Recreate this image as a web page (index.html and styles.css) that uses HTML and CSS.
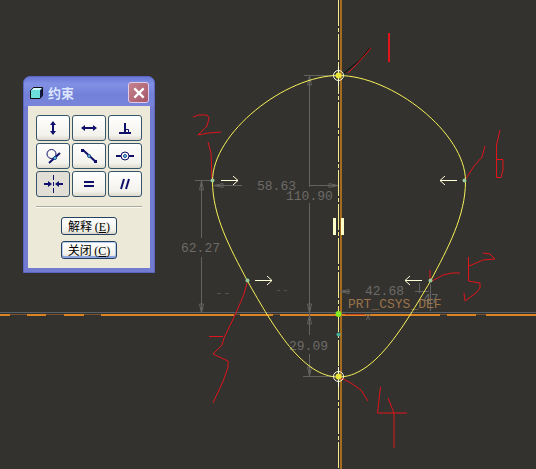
FILE: index.html
```html
<!DOCTYPE html>
<html lang="zh-CN">
<head>
<meta charset="utf-8">
<title>约束</title>
<link rel="stylesheet" href="styles.css">
</head>
<body>
<main class="workspace">
  <svg class="sketch" viewBox="0 0 536 469" role="img" aria-label="草绘">
    <defs>
      <g id="arrow"><path d="M0 .5H17M12 -4L17 .5L12 5"/></g>
      <g id="tip"><path d="M.5 0L-1.500 9H2.500Z"/></g>
    </defs>

    <!-- Datum axes -->
    <g class="crisp">
      <path class="axis-shade" d="M0 312.5H536"/>
      <path class="axis-base" d="M0 314.5H536"/>
      <path class="axis" d="M0 315H10M27 315H46M64 315H84M101 315H234M240 315H273M280 315H440M447 315H476M486 315H536"/>
      <path class="axis-upright" d="M340.5 0V469"/>
      <path class="axis-center" d="M338.5 0V469"/>
    </g>

    <!-- Dimensions -->
    <g class="dimension">
      <path d="M195 180.5H211M201.5 181V238M201.5 257V313M304 75.5H334M309.5 77V187M309.5 203V335M309.5 354V376M303 376.5H334M215 185.5H242M310 185.5H338M340 291.5H350M415 291.5H429M419.5 283V293M430.5 284V311"/>
      <path class="faint" d="M217 293.5H221M225 293.5H229M277 290.5H280M284 290.5H287"/>
      <use href="#tip" x="201" y="181"/>
      <use href="#tip" x="309" y="76"/>
      <use href="#tip" x="309" y="315"/>
      <use href="#tip" transform="translate(202 313) rotate(180)"/>
      <use href="#tip" transform="translate(310 313) rotate(180)"/>
      <use href="#tip" transform="translate(310 376) rotate(180)"/>
      <use href="#tip" transform="translate(214 186) rotate(-90)"/>
      <use href="#tip" transform="translate(338 185) rotate(90)"/>
      <use href="#tip" transform="translate(340 292) rotate(-90)"/>
      <path d="M366 314L370 320M370 314L366 320"/>
    </g>
    <g class="value">
      <text x="257" y="190">58.63</text>
      <text x="286" y="200">110.90</text>
      <text x="181" y="252">62.27</text>
      <text x="365" y="295">42.68</text>
      <text x="423" y="303">47</text>
      <text x="289" y="350">29.09</text>
      <text class="csys" x="348" y="308">PRT_CSYS_DEF</text>
    </g>

    <!-- Freehand notes -->
    <g class="ink">
      <path class="shadow" d="M344 73L360 60L370 48"/>
      <path d="M348 73L357 64L371 48"/>
      <path class="bold" d="M389 33V62"/>
      <path d="M193 117L199 115H207L209 118L207 126L198 135L208 133L221 132M208 142L211 153L212 180"/>
      <path d="M247 283L244 294L236 313L224 338L222 345L213 354L228 361L228 367L224 379L213 403M209 336.5H223"/>
      <path d="M341 378L351 383L361 390L368 401M380.500 387L377.500 413H407M388 398L394 413V448"/>
      <path d="M432 281L443 275L452 273H460M468.500 257V281L480 283L480 288L476 293L465 301L464 293M469 266L483 260L495 259L490 254L483 253M430 270V279"/>
      <path d="M465 180L474 166L482 157L485 146M500 130L496.500 145V177.500H501L503 170V159.500H497"/>
    </g>

    <!-- Spline -->
    <path class="spline" d="M338.500 75.500C285 75.500 212.500 133 212.500 181C212.500 216 230 248 247.500 281C274 328 303 377 338.500 377C374 377 403 328 430.500 281C448 248 465.500 216 465.500 181C465.500 133 392 75.500 338.500 75.500Z"/>

    <!-- Constraints -->
    <g class="arrows">
      <use href="#arrow" x="221" y="180"/>
      <use href="#arrow" x="255" y="280"/>
      <use href="#arrow" transform="translate(457 181) rotate(180)"/>
      <use href="#arrow" transform="translate(422 281) rotate(180)"/>
      <circle cx="338.5" cy="75.5" r="5"/>
      <circle cx="338.5" cy="376.5" r="5"/>
      <path d="M338.5 66V86M338.5 367V387"/>
    </g>
    <path class="bars" d="M333 218H336V235H333ZM341 218H344V235H341Z"/>
    <g class="points">
      <circle cx="212.5" cy="180.5" r="2"/>
      <circle cx="464.5" cy="180.5" r="2"/>
      <circle cx="247.5" cy="280.5" r="2"/>
      <circle cx="430.5" cy="280.5" r="2"/>
      <circle class="cyan" cx="338.5" cy="334.5" r="2"/>
      <circle class="lime" cx="338.5" cy="314" r="3"/>
      <circle class="gold" cx="338.5" cy="75.5" r="3"/>
      <circle class="gold" cx="338.5" cy="376.5" r="3"/>
    </g>
    <path class="x-axis" d="M345 314.5H365"/>
  </svg>

  <section class="dialog" aria-labelledby="dialog-title">
    <header class="titlebar">
      <svg class="cube" viewBox="0 0 13 12" aria-hidden="true">
        <path d="M.5 3.5L3.5 .5H12.5V8.500L10 11.5H.5Z" fill="#111844" stroke="#111"/>
        <path d="M1 3.5L3.5 1H12L10 3.5Z" fill="#d4ffff"/>
        <path d="M1 3H10V11H1Z" fill="#6ee0dc"/>
      </svg>
      <h1 class="title" id="dialog-title">约束</h1>
      <button class="close" type="button" aria-label="关闭窗口">
        <svg viewBox="0 0 12 12" aria-hidden="true"><path d="M2 2L10 10M10 2L2 10" stroke="#fff" stroke-width="2"/></svg>
      </button>
    </header>
    <div class="content">
      <div class="tools">
        <button class="tool" type="button" aria-label="竖直"><svg viewBox="0 0 20 16"><path d="M10 3V13"/><path class="solid" d="M10 1L13 5H7ZM10 15L7 11H13Z"/></svg></button>
        <button class="tool" type="button" aria-label="水平"><svg viewBox="0 0 20 16"><path d="M4 8H16"/><path class="solid" d="M2 8L6 5V11ZM18 8L14 5V11Z"/></svg></button>
        <button class="tool" type="button" aria-label="垂直"><svg viewBox="0 0 20 16"><path d="M10 3V13M4 13H16"/><path class="thin" d="M11 9.5H13.5V12"/></svg></button>
        <button class="tool" type="button" aria-label="相切"><svg viewBox="0 0 20 16"><circle class="thin" cx="8.5" cy="6" r="4.5"/><path d="M6 15L17 5"/><circle class="node" cx="12" cy="10" r="1.5"/></svg></button>
        <button class="tool" type="button" aria-label="中点"><svg viewBox="0 0 20 16"><path d="M4 2L17 14"/><path class="solid" d="M2 1H5V4H2ZM15 12H18V15H15Z"/><circle class="node" cx="10" cy="8" r="1.5"/></svg></button>
        <button class="tool" type="button" aria-label="重合"><svg viewBox="0 0 20 16"><path d="M1 8H6M14 8H19"/><circle class="thin" cx="10" cy="8" r="4"/><circle class="node" cx="10" cy="8" r="1.5"/></svg></button>
        <button class="tool pressed" type="button" aria-pressed="true" aria-label="对称"><svg viewBox="0 0 20 18"><path class="thin" d="M10.5 0V5M10.5 7V11M10.5 13V18"/><path d="M1 9H6M15 9H20"/><path class="solid" d="M9 9L5 6V12ZM12 9L16 6V12Z"/></svg></button>
        <button class="tool" type="button" aria-label="相等"><svg viewBox="0 0 20 16"><path d="M5 6H15M5 10H15"/></svg></button>
        <button class="tool" type="button" aria-label="平行"><svg viewBox="0 0 20 16"><path d="M6 13L9 3M11 13L14 3"/></svg></button>
      </div>
      <hr class="divider">
      <div class="actions">
        <button class="action" type="button">解释 <span class="key">(<u>E</u>)</span></button>
        <button class="action primary" type="button">关闭 <span class="key">(<u>C</u>)</span></button>
      </div>
    </div>
  </section>
</main>
</body>
</html>
```
FILE: styles.css
```css
* { box-sizing: border-box; }
body { margin: 0; background: #33322e; }
.workspace { position: relative; }

.sketch { display: block; width: 100%; height: auto; fill: none; }
.crisp { shape-rendering: crispEdges; }
.axis-shade { stroke: #58606a; }
.axis-base { stroke: #79502c; }
.axis { stroke: #dc8424; stroke-width: 2; }
.axis-upright { stroke: #a56c20; stroke-width: 2; }
.axis-center { stroke: #f6eb8d; stroke-dasharray: 26 2 4 2; }
.dimension { stroke: #62625f; }
.faint { stroke: #51514e; }
.value { font: 13px "Liberation Mono", monospace; fill: #6c6b68; }
.csys { fill: #9a744c; }
.ink { stroke: #e0141b; }
.bold { stroke-width: 2; }
.shadow { stroke: #080808; }
.spline { stroke: #f8f258; }
.arrows { stroke: #ffffda; }
.bars { fill: #ffffc8; }
.points { fill: #9bc99e; }
.cyan { fill: #42b09a; }
.lime { fill: #82ed20; }
.gold { fill: #e9e53b; }
.x-axis { stroke: #d44a20; }

.dialog {
  position: absolute;
  top: 76px;
  left: 23px;
  width: 132px;
  padding: 0 4px 4px;
  background: #737bd0;
  border: 1px solid #5c65c4;
  border-radius: 7px 7px 0 0;
}
.titlebar {
  display: flex;
  align-items: center;
  gap: 5px;
  height: 29px;
  margin: 0 -4px;
  padding: 2px 5px 0 6px;
  border-radius: 6px 6px 0 0;
  background: linear-gradient(#6a78d6, #8290e4 25%, #7381d8 60%, #7884da);
}
.cube { width: 13px; height: 12px; }
.title {
  flex: 1;
  margin: 0;
  color: #dce6ff;
  font: bold 13px/16px "Noto Sans CJK SC", sans-serif;
}
.close {
  display: grid;
  place-items: center;
  width: 21px;
  height: 21px;
  padding: 0;
  background: linear-gradient(135deg, #c4838f, #a75568);
  border: 1px solid #e0cce8;
  border-radius: 3px;
}
.close svg { width: 14px; height: 14px; }
.content { padding: 9px 8px; background: #ece9d8; }
.tools { display: grid; grid-template-columns: repeat(3, 1fr); gap: 2px; }
.tool {
  display: grid;
  place-items: center;
  height: 26px;
  padding: 0;
  border: 1px solid #36546a;
  border-radius: 3px;
  background: linear-gradient(#fff, #f3f2ec 80%, #dcd9cc);
}
.tool.pressed { background: #e0ded5; }
.tool svg { width: 20px; height: 16px; fill: none; stroke: #10106c; stroke-width: 2; }
.tool.pressed svg { height: 18px; }
.tool .solid { fill: #10106c; stroke: none; }
.tool .thin { stroke-width: 1; }
.tool .node { fill: #78d4e8; stroke: #1c4c8c; stroke-width: 1; }
.divider { height: 2px; margin: 9px 0; border: 0; border-top: 1px solid #aaa99b; border-bottom: 1px solid #fbfaf3; }
.actions { display: grid; justify-content: center; gap: 6px; }
.action {
  width: 56px;
  height: 18px;
  padding: 0;
  border: 1px solid #24425f;
  border-radius: 3px;
  background: linear-gradient(#fff, #f1f0e8 80%, #d8d4c7);
  color: #000;
  font: 12px/14px "Noto Sans CJK SC", sans-serif;
  white-space: nowrap;
}
.action.primary { box-shadow: inset 0 -2px #8ea6df, inset 0 0 0 1px #b9cdf3; }
.key { font-family: "Liberation Serif", serif; }
```
